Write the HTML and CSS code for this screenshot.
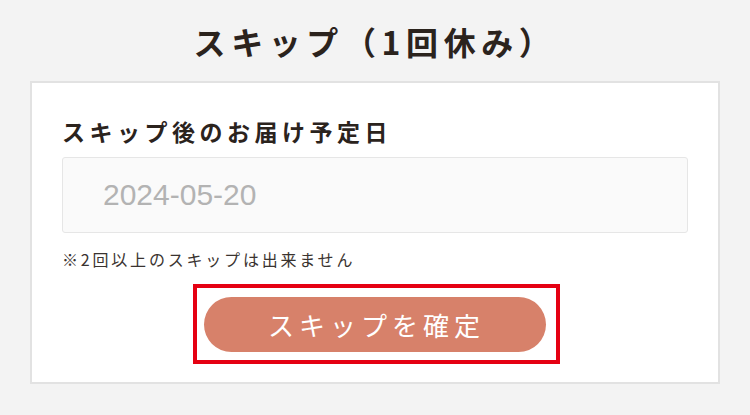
FILE: index.html
```html
<!DOCTYPE html>
<html>
<head>
  <meta charset="UTF-8">
  <title>スキップ</title>
  <link rel="stylesheet" href="styles.css">
</head>
<body>
  <div class="page">
    <h1 class="title">スキップ（1回休み）</h1>

    <div class="card">
      <label class="field-label" for="nextDate">スキップ後のお届け予定日</label>
      <input type="text" id="nextDate" class="date-input" value="2024-05-20" readonly>
      <p class="note">※2回以上のスキップは出来ません</p>
      <div class="action-row">
        <div class="highlight">
          <button class="confirm-btn">スキップを確定</button>
        </div>
      </div>
    </div>
  </div>
</body>
</html>
```

FILE: styles.css
```css
body {
  margin: 0;
  background: #f3f3f3;
  font-family: "Noto Sans CJK JP", "Noto Sans", sans-serif;
  color: #2b231d;
}
.page {
  width: 750px;
  padding-top: 18px;
}
.title {
  margin: 0 0 17px 0;
  text-align: center;
  font-size: 32px;
  line-height: 46px;
  font-weight: bold;
  letter-spacing: 5.6px;
  padding-left: 0;
}
.card {
  margin: 0 30px;
  background: #fff;
  border: 2px solid #e2e2e2;
  padding: 32px 30px 18px 30px;
  display: flex;
  flex-direction: column;
}
.field-label {
  display: block;
  font-size: 23px;
  line-height: 32px;
  font-weight: bold;
  letter-spacing: 4.5px;
  margin-bottom: 10px;
}
.date-input {
  box-sizing: border-box;
  width: 100%;
  height: 76px;
  padding: 0 0 0 40px;
  border: 1px solid #e6e6e6;
  border-radius: 3px;
  background: #fafafa;
  font-family: "Liberation Sans", Arial, sans-serif;
  font-size: 30px;
  color: #b3b3b3;
  outline: none;
}
.note {
  margin: 14px 0 0 0;
  font-size: 16px;
  line-height: 24px;
  letter-spacing: 2.8px;
  color: #3a3330;
}
.action-row {
  display: flex;
  justify-content: center;
  margin-top: 13px;
}
.highlight {
  border: 4px solid #e50012;
  padding: 9px 10px 8px 7px;
  margin-left: 3px;
}
.confirm-btn {
  display: block;
  width: 342px;
  height: 55px;
  border: none;
  border-radius: 28px;
  background: #d7816a;
  color: #fff;
  font-family: "Noto Sans CJK JP", sans-serif;
  font-size: 26px;
  letter-spacing: 5px;
  padding: 0 0 0 3px;
  cursor: pointer;
}
```
